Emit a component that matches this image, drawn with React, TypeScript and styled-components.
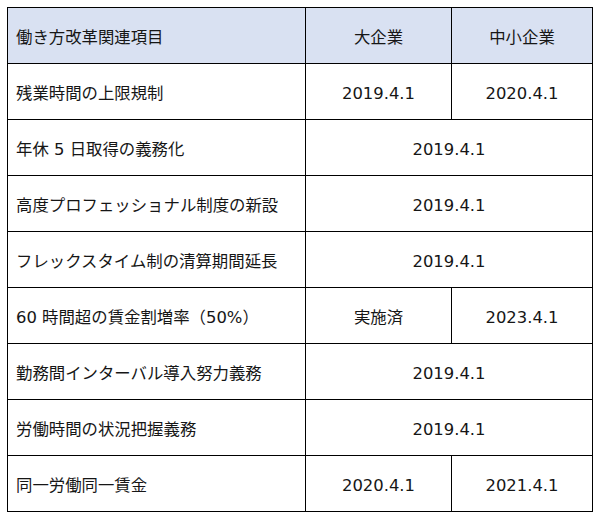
import React from "react";
import styled, { createGlobalStyle } from "styled-components";

const Global = createGlobalStyle`
  html, body { margin: 0; padding: 0; background: #fff; }
  body { font-family: "DejaVu Sans", "Noto Sans CJK JP", sans-serif; color: #161616; }
`;

const Page = styled.div`
  padding: 7px 0 0 7px;
`;

const Grid = styled.div`
  display: grid;
  width: max-content;
  grid-template-columns: 297px 145px 140px;
  grid-auto-rows: 55px;
  gap: 1px;
  padding: 1px;
  background: #000;
`;

const Cell = styled.div<{ $head?: boolean; $center?: boolean; $span?: number }>`
  display: flex;
  align-items: center;
  justify-content: ${(p) => (p.$center ? "center" : "flex-start")};
  grid-column: ${(p) => (p.$span ? `span ${p.$span}` : "auto")};
  background: ${(p) => (p.$head ? "#d9e1f2" : "#fff")};
  padding: 6px 0 0 ${(p) => (p.$center ? "0" : "8px")};
  box-sizing: border-box;
  font-size: 16.4px;
  line-height: 1;
  white-space: nowrap;
`;

type Row = { label: string; large: string; small?: string };

const rows: Row[] = [
  { label: "残業時間の上限規制", large: "2019.4.1", small: "2020.4.1" },
  { label: "年休 5 日取得の義務化", large: "2019.4.1" },
  { label: "高度プロフェッショナル制度の新設", large: "2019.4.1" },
  { label: "フレックスタイム制の清算期間延長", large: "2019.4.1" },
  { label: "60 時間超の賃金割増率（50%）", large: "実施済", small: "2023.4.1" },
  { label: "勤務間インターバル導入努力義務", large: "2019.4.1" },
  { label: "労働時間の状況把握義務", large: "2019.4.1" },
  { label: "同一労働同一賃金", large: "2020.4.1", small: "2021.4.1" },
];

export default function App() {
  return (
    <Page>
      <Global />
      <Grid>
        <Cell $head>働き方改革関連項目</Cell>
        <Cell $head $center>大企業</Cell>
        <Cell $head $center>中小企業</Cell>
        {rows.map((r) => (
          <React.Fragment key={r.label}>
            <Cell>{r.label}</Cell>
            {r.small ? (
              <>
                <Cell $center>{r.large}</Cell>
                <Cell $center>{r.small}</Cell>
              </>
            ) : (
              <Cell $center $span={2}>{r.large}</Cell>
            )}
          </React.Fragment>
        ))}
      </Grid>
    </Page>
  );
}
